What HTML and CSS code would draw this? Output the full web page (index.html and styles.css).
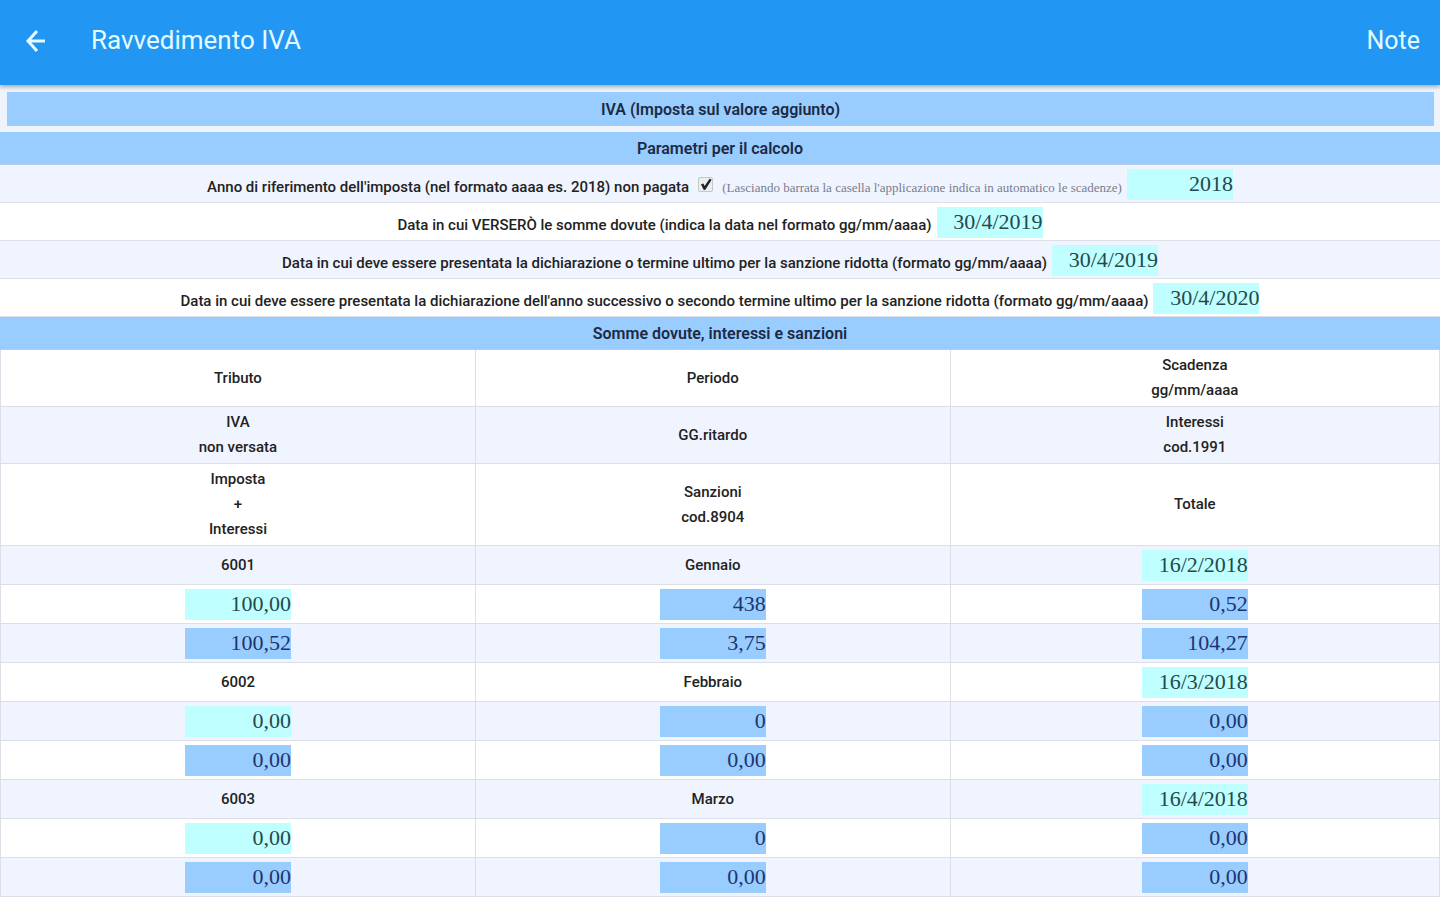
FILE: index.html
```html
<!DOCTYPE html>
<html lang="it">
<head>
  <meta charset="UTF-8">
  <meta name="viewport" content="width=device-width, initial-scale=1.0">
  <title>Ravvedimento IVA</title>
  <link rel="stylesheet" href="styles.css">
</head>
<body>

  <header class="toolbar">
    <button class="back" aria-label="Indietro">
      <svg width="22" height="24" viewBox="0 0 22 24" fill="none" stroke="currentColor" stroke-width="3">
        <path d="M20 12H3M12 2L3 12L12 22"/>
      </svg>
    </button>
    <h1>Ravvedimento IVA</h1>
    <button class="note-button">Note</button>
  </header>

  <main>
    <h2 class="main-title">IVA (Imposta sul valore aggiunto)</h2>

    <!-- Calculation parameters -->
    <h2 class="section-title">Parametri per il calcolo</h2>
    <form class="params">
      <div class="param">
        <label for="anno">Anno di riferimento dell'imposta (nel formato aaaa es. 2018) non pagata</label>
        <input type="checkbox" id="auto" checked>
        <label for="auto" class="hint">(Lasciando barrata la casella l'applicazione indica in automatico le scadenze)</label>
        <input type="text" id="anno" class="field" value="2018">
      </div>
      <div class="param">
        <label for="versamento">Data in cui VERSERÒ le somme dovute (indica la data nel formato gg/mm/aaaa)</label>
        <input type="text" id="versamento" class="field" value="30/4/2019">
      </div>
      <div class="param">
        <label for="termine1">Data in cui deve essere presentata la dichiarazione o termine ultimo per la sanzione ridotta (formato gg/mm/aaaa)</label>
        <input type="text" id="termine1" class="field" value="30/4/2019">
      </div>
      <div class="param">
        <label for="termine2">Data in cui deve essere presentata la dichiarazione dell'anno successivo o secondo termine ultimo per la sanzione ridotta (formato gg/mm/aaaa)</label>
        <input type="text" id="termine2" class="field" value="30/4/2020">
      </div>
    </form>

    <!-- Amounts, three rows for each month -->
    <h2 class="section-title">Somme dovute, interessi e sanzioni</h2>
    <table class="amounts">
      <colgroup>
        <col class="col-side">
        <col class="col-side">
        <col>
      </colgroup>
      <thead>
        <tr><th>Tributo</th><th>Periodo</th><th>Scadenza<br>gg/mm/aaaa</th></tr>
        <tr><th>IVA<br>non versata</th><th>GG.ritardo</th><th>Interessi<br>cod.1991</th></tr>
        <tr><th>Imposta<br>+<br>Interessi</th><th>Sanzioni<br>cod.8904</th><th>Totale</th></tr>
      </thead>
      <tbody>
        <tr>
          <td>6001</td>
          <td>Gennaio</td>
          <td><input type="text" class="field" aria-label="Scadenza gennaio" value="16/2/2018"></td>
        </tr>
        <tr>
          <td><input type="text" class="field" aria-label="IVA non versata gennaio" value="100,00"></td>
          <td><input type="text" class="field result" aria-label="Giorni ritardo gennaio" value="438" readonly></td>
          <td><input type="text" class="field result" aria-label="Interessi gennaio" value="0,52" readonly></td>
        </tr>
        <tr>
          <td><input type="text" class="field result" aria-label="Imposta e interessi gennaio" value="100,52" readonly></td>
          <td><input type="text" class="field result" aria-label="Sanzioni gennaio" value="3,75" readonly></td>
          <td><input type="text" class="field result" aria-label="Totale gennaio" value="104,27" readonly></td>
        </tr>
        <tr>
          <td>6002</td>
          <td>Febbraio</td>
          <td><input type="text" class="field" aria-label="Scadenza febbraio" value="16/3/2018"></td>
        </tr>
        <tr>
          <td><input type="text" class="field" aria-label="IVA non versata febbraio" value="0,00"></td>
          <td><input type="text" class="field result" aria-label="Giorni ritardo febbraio" value="0" readonly></td>
          <td><input type="text" class="field result" aria-label="Interessi febbraio" value="0,00" readonly></td>
        </tr>
        <tr>
          <td><input type="text" class="field result" aria-label="Imposta e interessi febbraio" value="0,00" readonly></td>
          <td><input type="text" class="field result" aria-label="Sanzioni febbraio" value="0,00" readonly></td>
          <td><input type="text" class="field result" aria-label="Totale febbraio" value="0,00" readonly></td>
        </tr>
        <tr>
          <td>6003</td>
          <td>Marzo</td>
          <td><input type="text" class="field" aria-label="Scadenza marzo" value="16/4/2018"></td>
        </tr>
        <tr>
          <td><input type="text" class="field" aria-label="IVA non versata marzo" value="0,00"></td>
          <td><input type="text" class="field result" aria-label="Giorni ritardo marzo" value="0" readonly></td>
          <td><input type="text" class="field result" aria-label="Interessi marzo" value="0,00" readonly></td>
        </tr>
        <tr>
          <td><input type="text" class="field result" aria-label="Imposta e interessi marzo" value="0,00" readonly></td>
          <td><input type="text" class="field result" aria-label="Sanzioni marzo" value="0,00" readonly></td>
          <td><input type="text" class="field result" aria-label="Totale marzo" value="0,00" readonly></td>
        </tr>
      </tbody>
    </table>
  </main>

</body>
</html>
```
FILE: styles.css
```css
* {
  box-sizing: border-box;
}

body {
  margin: 0;
  background-color: #fff;
  color: #222;
  font-family: Roboto, "Liberation Sans", sans-serif;
  font-size: 15px;
  font-weight: 500;
  line-height: 25px;
}

/* Top bar */
.toolbar {
  position: relative;
  display: flex;
  align-items: center;
  height: 85px;
  padding: 0 20px 4px 25px;
  background-color: #2196f3;
  box-shadow: 0 2px 4px rgba(0, 0, 0, 0.3);
  color: #e4fbff;
}

.toolbar h1 {
  flex: 1;
  margin: 0 0 0 44px;
  font-size: 26px;
  font-weight: 400;
}

.toolbar button {
  padding: 0;
  border: none;
  background: none;
  color: inherit;
  cursor: pointer;
}

.toolbar .back {
  display: flex;
}

.toolbar .note-button {
  font-family: inherit;
  font-size: 25px;
}

/* Headings */
main {
  padding-top: 7px;
  background-color: #eef3fc;
}

.main-title,
.section-title {
  margin: 0;
  padding-top: 2px;
  background-color: #9cf;
  font-size: 16px;
  font-weight: 600;
  line-height: 30px;
  text-align: center;
  color: #1c2a44;
}

.main-title {
  margin: 0 6px 6px 7px;
  line-height: 32px;
}

.section-title {
  border-bottom: 1px solid #b4cdea;
}

/* Parameters */
.param {
  display: flex;
  align-items: center;
  justify-content: center;
  gap: 5px;
  padding: 4px 0 2px;
  background-color: #fff;
  border-bottom: 1px solid #dcdfe6;
}

.param label {
  padding-top: 5px;
}

.param:nth-child(odd),
.amounts tr:nth-child(even),
.amounts tbody tr:nth-child(odd) {
  background-color: #f0f4ff;
}

.amounts tbody tr:nth-child(even) {
  background-color: #fff;
}

.param .hint {
  font-family: "Liberation Serif", serif;
  font-size: 13px;
  font-weight: 400;
  color: #777d8c;
}

.param input[type="checkbox"] {
  appearance: none;
  width: 15px;
  height: 15px;
  margin: 0 4px;
  border: 1px solid #c4c8c8;
  border-radius: 2px;
  background-color: #e9eeee;
}

.param input[type="checkbox"]:checked::after {
  content: "";
  display: block;
  width: 13px;
  height: 13px;
  background-color: #222;
  clip-path: polygon(14% 48%, 32% 42%, 42% 62%, 80% 6%, 96% 14%, 46% 92%, 34% 90%);
}

.field {
  display: block;
  width: 106px;
  height: 31px;
  padding: 0 0 2px;
  border: none;
  background-color: #bfffff;
  color: #24494d;
  font-family: "Liberation Serif", serif;
  font-size: 22px;
  text-align: right;
}

.field.result {
  background-color: #9cf;
  color: #1d356e;
}

/* Amounts */
.amounts {
  width: 100%;
  background-color: #fff;
  border-collapse: collapse;
  table-layout: fixed;
}

.col-side {
  width: 33%;
}

.amounts th,
.amounts td {
  padding: 3px 0;
  border: 1px solid #dcdfe6;
  border-top: none;
  font-weight: 500;
  text-align: center;
}

.amounts td {
  padding: 4px 0 3px;
}

.amounts .field {
  margin: 0 auto;
}
```
